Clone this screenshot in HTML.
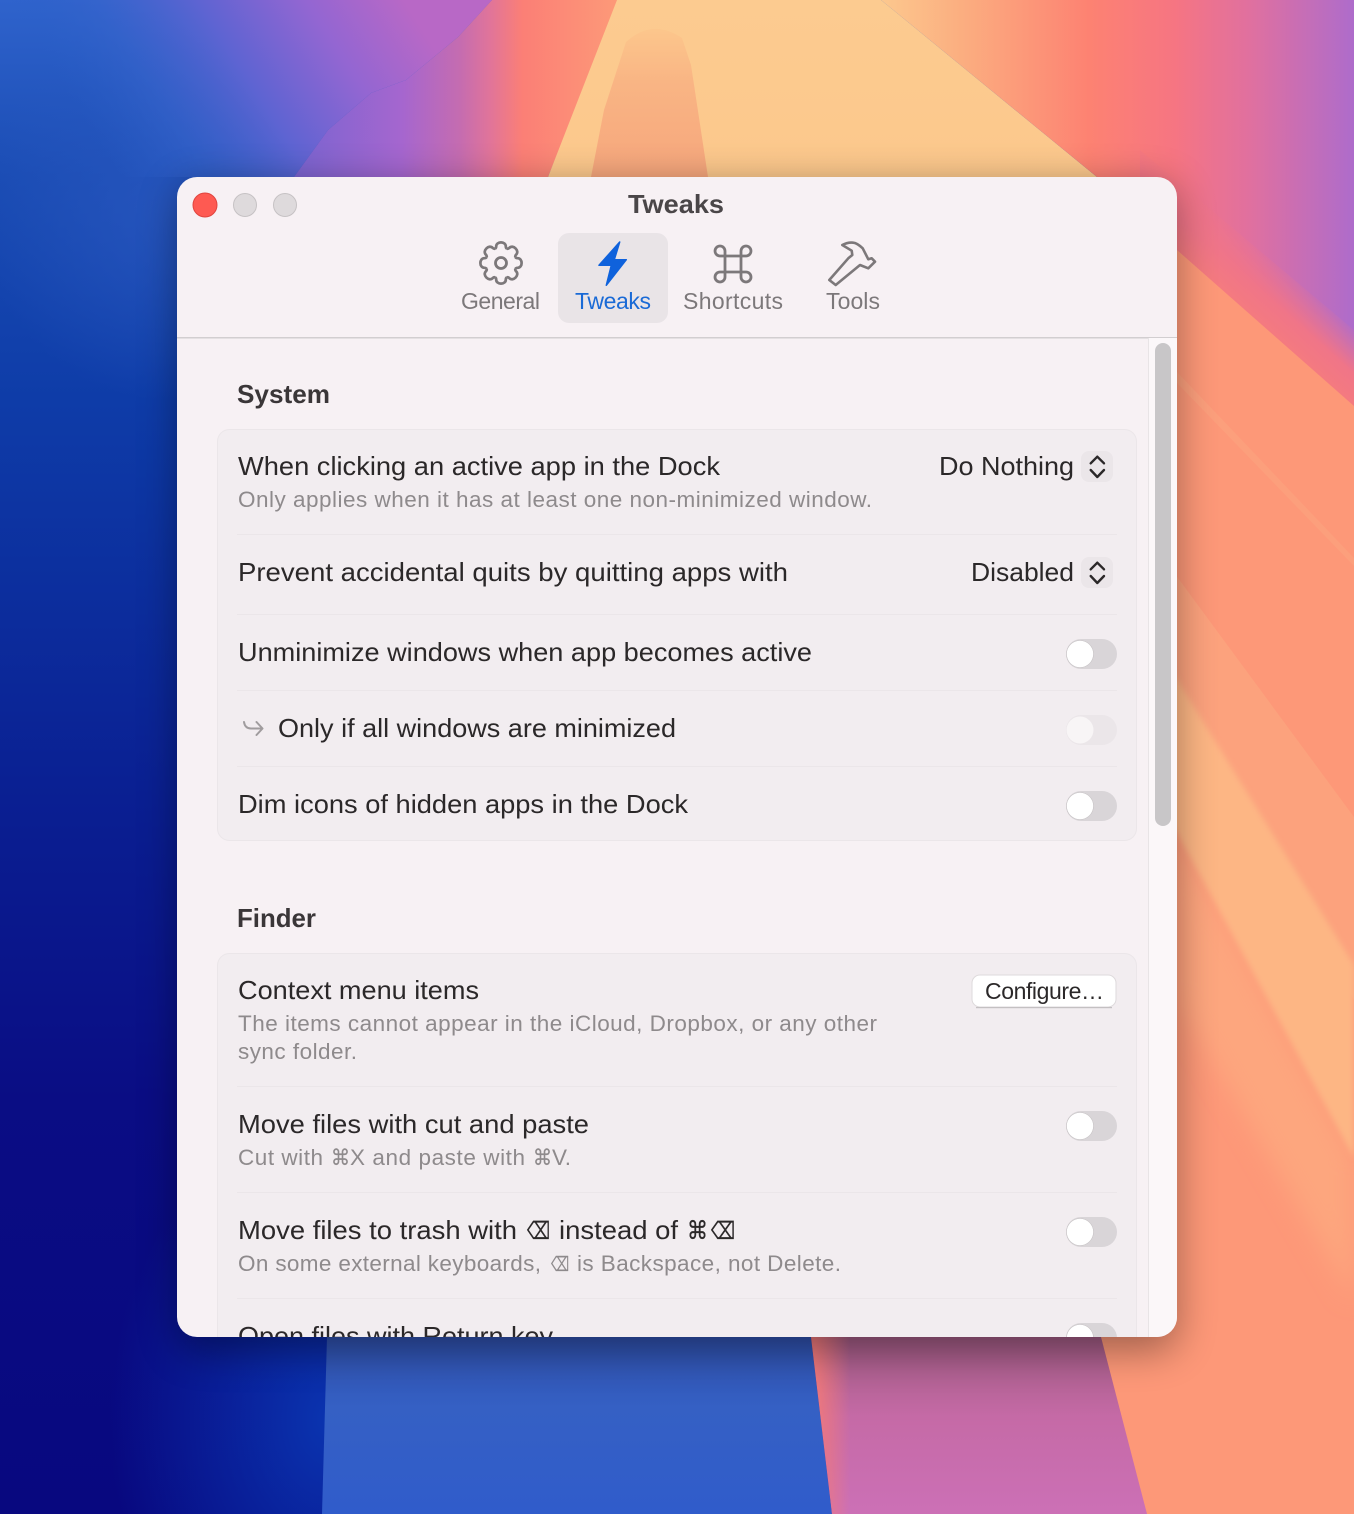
<!DOCTYPE html>
<html lang="en"><head><meta charset="utf-8"><title>Tweaks</title>
<style>
html,body{margin:0;padding:0;width:1354px;height:1514px;overflow:hidden;background:#000}
svg{display:block;position:absolute;left:0;top:0}
text{font-family:"Liberation Sans","DejaVu Sans",sans-serif}
.t{font-size:26px;fill:#2b2829}
.s{font-size:22.5px;fill:#8e8a8c}
.h{font-size:26px;font-weight:bold;fill:#3a3638}
.l{font-size:23px;fill:#7c787a}
.g{font-family:"DejaVu Sans",sans-serif}
</style></head><body>
<svg xmlns="http://www.w3.org/2000/svg" width="1354" height="1514" viewBox="0 0 1354 1514">
<defs>
<linearGradient id="left" x1="0" x2="0" y1="0" y2="1514" gradientUnits="userSpaceOnUse">
<stop offset="0" stop-color="#2f63cc"/><stop offset=".117" stop-color="#1a4cb4"/><stop offset=".264" stop-color="#0e3ca8"/><stop offset=".528" stop-color="#0a1f92"/><stop offset=".726" stop-color="#0a0d84"/><stop offset="1" stop-color="#08087f"/>
</linearGradient>
<radialGradient id="gl1" cx="170" cy="210" r="190" gradientUnits="userSpaceOnUse"><stop offset="0" stop-color="#2a58c0" stop-opacity=".75"/><stop offset="1" stop-color="#2a58c0" stop-opacity="0"/></radialGradient>
<radialGradient id="gl2" gradientUnits="userSpaceOnUse" cx="0" cy="0" r="1" gradientTransform="translate(330 1420) scale(220 300)"><stop offset="0" stop-color="#0a34b0"/><stop offset="1" stop-color="#0a34b0" stop-opacity="0"/></radialGradient>
<linearGradient id="tl" x1="130" y1="190" x2="410" y2="10" gradientUnits="userSpaceOnUse">
<stop offset="0" stop-color="#2a5fc8" stop-opacity="0"/><stop offset=".22" stop-color="#3864cc" stop-opacity=".6"/><stop offset=".48" stop-color="#5e64d2"/><stop offset=".75" stop-color="#9366d2"/><stop offset="1" stop-color="#b868c6"/>
</linearGradient>
<linearGradient id="tm" x1="294" x2="620" y1="0" y2="0" gradientUnits="userSpaceOnUse">
<stop offset="0" stop-color="#7a64d0"/><stop offset=".33" stop-color="#a566cf"/><stop offset=".51" stop-color="#c56cb0"/><stop offset=".6" stop-color="#e0749a"/><stop offset=".7" stop-color="#fb7f76"/><stop offset="1" stop-color="#fd9a78"/>
</linearGradient>
<linearGradient id="tr" x1="881" x2="1354" y1="0" y2="0" gradientUnits="userSpaceOnUse">
<stop offset="0" stop-color="#fcc88e"/><stop offset=".17" stop-color="#fbae80"/><stop offset=".44" stop-color="#fd8272"/><stop offset=".62" stop-color="#f67582"/><stop offset=".78" stop-color="#e0709f"/><stop offset="1" stop-color="#ae6ccb"/>
</linearGradient>
<linearGradient id="strip" x1="1305" y1="282" x2="1265" y2="327" gradientUnits="userSpaceOnUse">
<stop offset="0" stop-color="#f07588" stop-opacity="0"/><stop offset=".6" stop-color="#f07588"/><stop offset="1" stop-color="#f47a80"/>
</linearGradient>
<linearGradient id="peach" x1="0" x2="0" y1="0" y2="177" gradientUnits="userSpaceOnUse"><stop offset="0" stop-color="#fccb90"/><stop offset="1" stop-color="#fcc88c"/></linearGradient>
<linearGradient id="inner" x1="0" x2="0" y1="30" y2="177" gradientUnits="userSpaceOnUse"><stop offset="0" stop-color="#fcc68c"/><stop offset=".35" stop-color="#f9b584"/><stop offset="1" stop-color="#f6a67c"/></linearGradient>
<linearGradient id="blue" x1="0" x2="0" y1="1337" y2="1514" gradientUnits="userSpaceOnUse"><stop offset="0" stop-color="#2f50ac"/><stop offset=".4" stop-color="#3560c4"/><stop offset="1" stop-color="#305ccb"/></linearGradient>
<linearGradient id="pink" x1="0" x2="0" y1="1337" y2="1514" gradientUnits="userSpaceOnUse"><stop offset="0" stop-color="#a05a82"/><stop offset=".45" stop-color="#c56aa6"/><stop offset="1" stop-color="#cc70b6"/></linearGradient>
<linearGradient id="pinkl" x1="815" x2="850" y1="0" y2="0" gradientUnits="userSpaceOnUse"><stop offset="0" stop-color="#f47a78" stop-opacity=".9"/><stop offset="1" stop-color="#f47a78" stop-opacity="0"/></linearGradient>
<filter id="sh" x="-15%" y="-15%" width="130%" height="130%"><feGaussianBlur stdDeviation="20"/></filter>
<filter id="b3" x="-30%" y="-30%" width="160%" height="160%"><feGaussianBlur stdDeviation="3"/></filter>
<filter id="b10" x="-30%" y="-30%" width="160%" height="160%"><feGaussianBlur stdDeviation="12"/></filter>
<clipPath id="win"><rect x="177" y="177" width="1000" height="1160" rx="20"/></clipPath>
<clipPath id="page"><rect width="1354" height="1514"/></clipPath>
<path id="tooth" d="M-5.93-14.32Q-4.8-15-4.8-16.500C-5-22 5-22 4.800-16.500Q4.800-15 5.930-14.320" fill="none" stroke="#7c787a" stroke-width="2.700" stroke-linejoin="round"/>
</defs>

<g clip-path="url(#page)">
<!-- wallpaper -->
<rect width="1354" height="1514" fill="url(#left)"/>
<rect x="0" y="20" width="360" height="380" fill="url(#gl1)"/>
<rect x="100" y="1120" width="230" height="394" fill="url(#gl2)"/>
<path d="M0 0H492L458 37 406 80 371 93 328 130 294 177H0Z" fill="url(#tl)"/>
<path d="M492 0H620L548 177H294L328 130 371 93 406 80 458 37Z" fill="url(#tm)"/>
<path d="M617 0H881L1097 177H548Z" fill="url(#peach)"/>
<path d="M591 177 604 110 626 42Q652 18 682 38L691 65 708 177Z" fill="url(#inner)"/>
<path d="M881 0H1354V440H1140V177H1097Z" fill="url(#tr)"/>
<path d="M1140 150 1354 330V440H1140Z" fill="url(#strip)"/>
<path d="M1140 250H1177L1354 406V1514H832L811 1300H1140Z" fill="#fd9878"/>
<path d="M1177 372 1354 558V566L1177 383Z" fill="#fbb088" opacity=".3"/>
<path d="M1150 540 1354 817V1000L1150 640Z" fill="#fca27d"/>
<path d="M1177 832 1354 1158V1300L1177 1000Z" fill="#fda67e" filter="url(#b10)"/>
<path d="M1140 620 1354 965V1158L1140 765Z" fill="#fdb684" filter="url(#b3)"/>
<path d="M327 1337H811L832 1514H322Z" fill="url(#blue)"/>
<path d="M811 1337H1101L1147 1514H832Z" fill="url(#pink)"/>
<path d="M811 1337H850V1514H832Z" fill="url(#pinkl)"/>

<!-- window shadow -->
<rect x="177" y="185" width="1000" height="1166" rx="20" fill="#000" opacity=".36" filter="url(#sh)"/>

<!-- window -->
<g clip-path="url(#win)">
<rect x="177" y="177" width="1000" height="1160" fill="#f7f1f4"/>
<rect x="177" y="337" width="1000" height="1.500" fill="#d2ced0"/>
<rect x="1148" y="338" width="29" height="999" fill="#fbf7f9"/>
<rect x="1148" y="338" width="1" height="999" fill="#e8e4e6"/>
<rect x="1155" y="343" width="16" height="483" rx="8" fill="#c8c6c8"/>

<!-- titlebar -->
<circle cx="205" cy="205" r="12" fill="#fe5a52" stroke="#e0443e" stroke-width="1"/>
<circle cx="245" cy="205" r="11.500" fill="#dedadc" stroke="#c6c2c4" stroke-width="1"/>
<circle cx="285" cy="205" r="11.500" fill="#dedadc" stroke="#c6c2c4" stroke-width="1"/>
<text x="628" y="213" class="h" style="fill:#4a4648" textLength="96" lengthAdjust="spacingAndGlyphs">Tweaks</text>

<!-- tabs -->
<rect x="558" y="233" width="110" height="90" rx="11" fill="#e9e4e7"/>
<g transform="translate(501 263)">
<use href="#tooth"/><use href="#tooth" transform="rotate(45)"/><use href="#tooth" transform="rotate(90)"/><use href="#tooth" transform="rotate(135)"/><use href="#tooth" transform="rotate(180)"/><use href="#tooth" transform="rotate(225)"/><use href="#tooth" transform="rotate(270)"/><use href="#tooth" transform="rotate(315)"/>
<circle r="5.500" fill="none" stroke="#7c787a" stroke-width="2.800"/>
</g>
<path d="M619.7 242 599 265.3H611.3L606.3 285.3 626.3 259.7H614.3Z" fill="#0f62dc" stroke="#0f62dc" stroke-width="1.500" stroke-linejoin="round"/>
<path d="M725 256H720a5 5 0 1 1 5-5V277a5 5 0 1 1-5-5H746a5 5 0 1 1-5 5V251a5 5 0 1 1 5 5H725" fill="none" stroke="#7c787a" stroke-width="2.800"/>
<path d="M829.300 280 835.700 285 860 265 868.300 268.300 875 261.700 871.700 258.300 868.300 259.300 862.700 248.300Q857 243 853.300 242.700 848 242 842.300 245L851.700 250.700 852.300 255 848.300 258.300Z" fill="none" stroke="#7c787a" stroke-width="2.600" stroke-linejoin="round"/>
<text x="461" y="309" class="l" textLength="79">General</text>
<text x="575" y="309" class="l" style="fill:#1a6ad6" textLength="76">Tweaks</text>
<text x="683" y="309" class="l" textLength="100">Shortcuts</text>
<text x="826" y="309" class="l" textLength="54">Tools</text>

<!-- System -->
<text x="237" y="403" class="h" textLength="93" lengthAdjust="spacingAndGlyphs">System</text>
<rect x="217.500" y="429.500" width="919" height="411" rx="12" fill="#f2edf0" stroke="#ebe6e9"/>
<g fill="#ebe6e9">
<rect x="237" y="534" width="880" height="1"/><rect x="237" y="614" width="880" height="1"/><rect x="237" y="690" width="880" height="1"/><rect x="237" y="766" width="880" height="1"/>
</g>
<text x="238" y="475" class="t" textLength="482" lengthAdjust="spacingAndGlyphs">When clicking an active app in the Dock</text>
<text x="238" y="507" class="s" textLength="634">Only applies when it has at least one non-minimized window.</text>
<text x="939" y="475" class="t" textLength="135" lengthAdjust="spacingAndGlyphs">Do Nothing</text>
<rect x="1081" y="451" width="32" height="31" rx="8" fill="#ebe6e9"/>
<path d="M1090.700 463.300 1097.300 456.700 1104 463.300M1090.700 470 1097.300 477 1104 470" fill="none" stroke="#2b2829" stroke-width="2.400" stroke-linecap="round" stroke-linejoin="round"/>

<text x="238" y="581" class="t" textLength="550" lengthAdjust="spacingAndGlyphs">Prevent accidental quits by quitting apps with</text>
<text x="971" y="581" class="t" textLength="103" lengthAdjust="spacingAndGlyphs">Disabled</text>
<rect x="1081" y="557" width="32" height="31" rx="8" fill="#ebe6e9"/>
<path d="M1090.700 569.300 1097.300 562.700 1104 569.300M1090.700 576 1097.300 583 1104 576" fill="none" stroke="#2b2829" stroke-width="2.400" stroke-linecap="round" stroke-linejoin="round"/>

<text x="238" y="661" class="t" textLength="574" lengthAdjust="spacingAndGlyphs">Unminimize windows when app becomes active</text>
<rect x="1066" y="639" width="51" height="30" rx="15" fill="#d9d5d8"/><circle cx="1080" cy="654" r="13.500" fill="#fff" stroke="#c8c4c6" stroke-width=".6"/>

<path d="M244 722Q245 728.500 251 728.500H262M256.500 722 262.500 728.500 256.500 735" fill="none" stroke="#a09c9e" stroke-width="2" stroke-linecap="round" stroke-linejoin="round"/>
<text x="278" y="737" class="t" textLength="398" lengthAdjust="spacingAndGlyphs">Only if all windows are minimized</text>
<rect x="1066" y="715" width="51" height="30" rx="15" fill="#ebe6e9"/><circle cx="1080" cy="730" r="13.500" fill="#f8f5f6"/>

<text x="238" y="813" class="t" textLength="450" lengthAdjust="spacingAndGlyphs">Dim icons of hidden apps in the Dock</text>
<rect x="1066" y="791" width="51" height="30" rx="15" fill="#d9d5d8"/><circle cx="1080" cy="806" r="13.500" fill="#fff" stroke="#c8c4c6" stroke-width=".6"/>

<!-- Finder -->
<text x="237" y="927" class="h" textLength="79" lengthAdjust="spacingAndGlyphs">Finder</text>
<path d="M217.500 1337V965.500a12 12 0 0 1 12-12H1124.500a12 12 0 0 1 12 12V1337" fill="#f2edf0" stroke="#ebe6e9"/>
<g fill="#ebe6e9"><rect x="237" y="1086" width="880" height="1"/><rect x="237" y="1192" width="880" height="1"/><rect x="237" y="1298" width="880" height="1"/></g>
<text x="238" y="999" class="t" textLength="241" lengthAdjust="spacingAndGlyphs">Context menu items</text>
<text x="238" y="1031" class="s" textLength="639">The items cannot appear in the iCloud, Dropbox, or any other</text>
<text x="238" y="1059" class="s" textLength="119">sync folder.</text>
<rect x="972" y="975" width="144" height="32" rx="8" fill="#fff" stroke="#dedadc" stroke-width="1"/>
<rect x="976" y="1007" width="136" height="1.200" fill="#c4c0c2"/>
<text x="985" y="999" class="t" style="font-size:23px" textLength="119">Configure…</text>

<text x="238" y="1133" class="t" textLength="351" lengthAdjust="spacingAndGlyphs">Move files with cut and paste</text>
<text x="238" y="1165" class="s" textLength="85">Cut with</text>
<text x="331" y="1165" class="s g" style="font-size:22px;stroke:#8e8a8c;stroke-width:.2" textLength="19" lengthAdjust="spacingAndGlyphs">⌘</text>
<text x="350" y="1165" class="s" textLength="175">X and paste with</text>
<text x="533" y="1165" class="s g" style="font-size:22px;stroke:#8e8a8c;stroke-width:.2" textLength="19" lengthAdjust="spacingAndGlyphs">⌘</text>
<text x="552" y="1165" class="s" textLength="19">V.</text>
<rect x="1066" y="1111" width="51" height="30" rx="15" fill="#d9d5d8"/><circle cx="1080" cy="1126" r="13.500" fill="#fff" stroke="#c8c4c6" stroke-width=".6"/>

<text x="238" y="1239" class="t" textLength="279" lengthAdjust="spacingAndGlyphs">Move files to trash with</text>
<text x="527" y="1239" class="t g" style="font-size:24px;stroke:#2b2829;stroke-width:.25" textLength="23" lengthAdjust="spacingAndGlyphs">⌫</text>
<text x="559" y="1239" class="t" textLength="119" lengthAdjust="spacingAndGlyphs">instead of</text>
<text x="687" y="1239" class="t g" style="font-size:25px;stroke:#2b2829;stroke-width:.3" textLength="21" lengthAdjust="spacingAndGlyphs">⌘</text>
<text x="711" y="1239" class="t g" style="font-size:24px;stroke:#2b2829;stroke-width:.25" textLength="24" lengthAdjust="spacingAndGlyphs">⌫</text>
<rect x="1066" y="1217" width="51" height="30" rx="15" fill="#d9d5d8"/><circle cx="1080" cy="1232" r="13.500" fill="#fff" stroke="#c8c4c6" stroke-width=".6"/>
<text x="238" y="1271" class="s" textLength="303">On some external keyboards,</text>
<text x="551" y="1271" class="s g" style="font-size:20px;stroke:#8e8a8c;stroke-width:.2" textLength="18" lengthAdjust="spacingAndGlyphs">⌫</text>
<text x="577" y="1271" class="s" textLength="264">is Backspace, not Delete.</text>

<text x="238" y="1345" class="t" textLength="315" lengthAdjust="spacingAndGlyphs">Open files with Return key</text>
<rect x="1066" y="1323" width="51" height="30" rx="15" fill="#d9d5d8"/><circle cx="1080" cy="1338" r="13.500" fill="#fff" stroke="#c8c4c6" stroke-width=".6"/>
</g>
</g>
</svg>
</body></html>
